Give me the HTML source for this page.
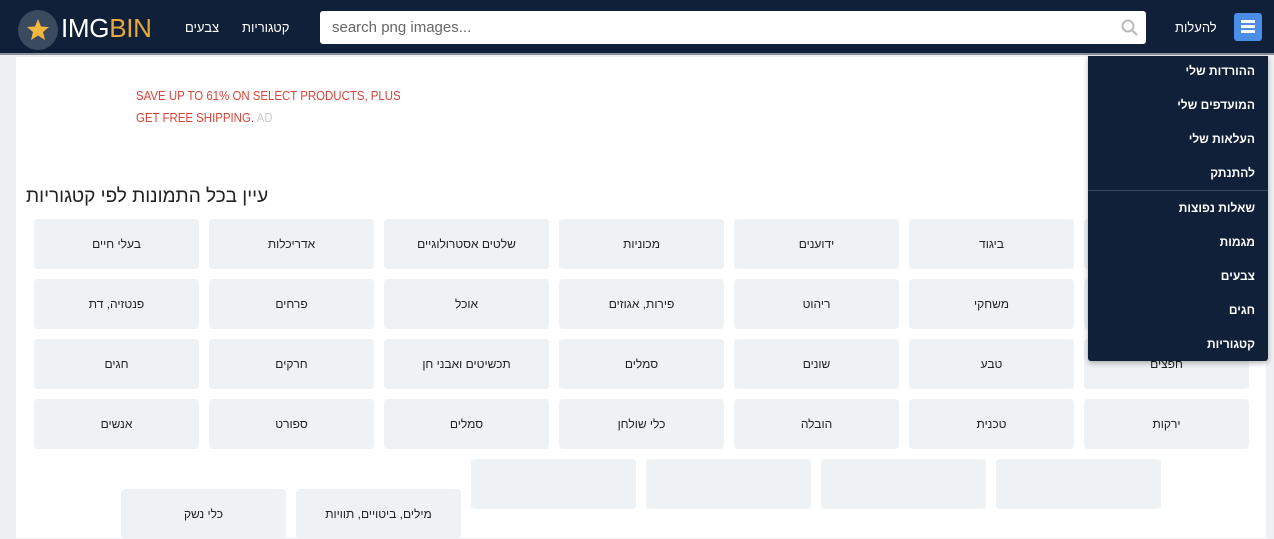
<!DOCTYPE html>
<html><head><meta charset="utf-8"><style>
*{margin:0;padding:0;box-sizing:border-box}
body{width:1274px;height:538px;overflow:hidden;background:#eef1f4;font-family:"Liberation Sans","Noto Sans CJK SC",sans-serif;position:relative}
.hdr{position:absolute;left:0;top:0;width:1274px;height:55px;background:#0f2038;border-bottom:2px solid #8a9099}
.main{position:absolute;left:16px;top:57px;width:1250px;height:481px;background:#fff}
.abs{position:absolute}
.t{position:absolute;width:165px;height:50px;background:#eff2f5;border-radius:4px;font-size:12px;color:#222;display:flex;align-items:center;justify-content:center;direction:rtl}
.menu{position:absolute;left:1088px;top:56px;width:180px;height:305px;background:#0f2038;border-radius:0 0 3px 3px;box-shadow:0 2px 6px rgba(0,0,0,.3)}
.mi{position:absolute;right:13px;font-size:12px;font-weight:bold;color:#fff;direction:rtl}
.nav{position:absolute;top:20px;color:#fff;font-size:13px;direction:rtl}
</style></head><body>
<div class="hdr">
 <div class="abs" style="left:18px;top:10px;width:40px;height:40px;border-radius:50%;background:#3a4a5f"></div>
 <svg class="abs" style="left:26px;top:18px" width="24" height="23" viewBox="0 0 24 23"><polygon points="12,1 15,8.5 23,9 17,14 19,22 12,17.5 5,22 7,14 1,9 9,8.5" fill="#f4b73d"/></svg>
 <div class="abs" style="left:61px;top:13px;font-size:26px;letter-spacing:-0.3px;color:#fff">IMG<span style="color:#e9a93c">BIN</span></div>
 <div class="nav" style="left:185px">צבעים</div>
 <div class="nav" style="left:242px">קטגוריות</div>
 <div class="abs" style="left:320px;top:11px;width:826px;height:33px;background:#fff;border-radius:3px;font-size:15px;color:#666;padding:8px 12px">search png images...</div>
 <svg class="abs" style="left:1121px;top:19px" width="18" height="18" viewBox="0 0 18 18"><circle cx="7" cy="7" r="5.5" fill="none" stroke="#bbb" stroke-width="2"/><line x1="11" y1="11" x2="16" y2="16" stroke="#bbb" stroke-width="2.2"/></svg>
 <div class="nav" style="left:1175px">להעלות</div>
 <div class="abs" style="left:1234px;top:13px;width:28px;height:28px;background:#4a8ee8;border-radius:3px"></div>
 <div class="abs" style="left:1241px;top:20px;width:14px;height:2.5px;background:#fff;box-shadow:0 5px 0 #fff,0 10px 0 #fff"></div>
</div>
<div class="main"></div>
<div class="abs" style="left:136px;top:85px;font-size:13px;color:#d9443a;line-height:22px;transform:scaleX(0.88);transform-origin:left;white-space:nowrap">SAVE UP TO 61% ON SELECT PRODUCTS, PLUS<br>GET FREE SHIPPING. <span style="color:#ccc">AD</span></div>
<div class="abs" style="left:26px;top:186px;font-size:19px;color:#222;direction:rtl">עיין בכל התמונות לפי קטגוריות</div>

<div class="t" style="left:1084px;top:219px"></div>
<div class="t" style="left:909px;top:219px">ביגוד</div>
<div class="t" style="left:734px;top:219px">ידוענים</div>
<div class="t" style="left:559px;top:219px">מכוניות</div>
<div class="t" style="left:384px;top:219px">שלטים אסטרולוגיים</div>
<div class="t" style="left:209px;top:219px">אדריכלות</div>
<div class="t" style="left:34px;top:219px">בעלי חיים</div>

<div class="t" style="left:1084px;top:279px"></div>
<div class="t" style="left:909px;top:279px">משחקי</div>
<div class="t" style="left:734px;top:279px">ריהוט</div>
<div class="t" style="left:559px;top:279px">פירות, אגוזים</div>
<div class="t" style="left:384px;top:279px">אוכל</div>
<div class="t" style="left:209px;top:279px">פרחים</div>
<div class="t" style="left:34px;top:279px">פנטזיה, דת</div>

<div class="t" style="left:1084px;top:339px">חפצים</div>
<div class="t" style="left:909px;top:339px">טבע</div>
<div class="t" style="left:734px;top:339px">שונים</div>
<div class="t" style="left:559px;top:339px">סמלים</div>
<div class="t" style="left:384px;top:339px">תכשיטים ואבני חן</div>
<div class="t" style="left:209px;top:339px">חרקים</div>
<div class="t" style="left:34px;top:339px">חגים</div>

<div class="t" style="left:1084px;top:399px">ירקות</div>
<div class="t" style="left:909px;top:399px">טכנית</div>
<div class="t" style="left:734px;top:399px">הובלה</div>
<div class="t" style="left:559px;top:399px">כלי שולחן</div>
<div class="t" style="left:384px;top:399px">סמלים</div>
<div class="t" style="left:209px;top:399px">ספורט</div>
<div class="t" style="left:34px;top:399px">אנשים</div>

<div class="t" style="left:996px;top:459px"></div>
<div class="t" style="left:821px;top:459px"></div>
<div class="t" style="left:646px;top:459px"></div>
<div class="t" style="left:471px;top:459px"></div>
<div class="t" style="left:296px;top:489px">מילים, ביטויים, תוויות</div>
<div class="t" style="left:121px;top:489px">כלי נשק</div>

<div class="menu">
 <div class="mi" style="top:8px">ההורדות שלי</div>
 <div class="mi" style="top:42px">המועדפים שלי</div>
 <div class="mi" style="top:76px">העלאות שלי</div>
 <div class="mi" style="top:110px">להתנתק</div>
 <div class="abs" style="left:0;top:134px;width:180px;height:1px;background:#3a4a5f"></div>
 <div class="mi" style="top:145px">שאלות נפוצות</div>
 <div class="mi" style="top:179px">מגמות</div>
 <div class="mi" style="top:213px">צבעים</div>
 <div class="mi" style="top:247px">חגים</div>
 <div class="mi" style="top:281px">קטגוריות</div>
</div>
</body></html>
